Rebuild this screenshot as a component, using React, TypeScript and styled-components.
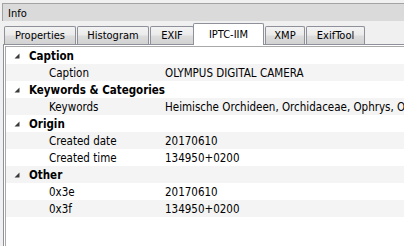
import React from 'react';
import styled, { createGlobalStyle } from 'styled-components';

const Global = createGlobalStyle`
  html, body { margin: 0; padding: 0; background: #f0f0f0; }
  body {
    font-family: "DejaVu Sans Condensed", "DejaVu Sans", sans-serif;
    font-size: 11px;
    color: #000;
  }
`;

const Frame = styled.div`
  width: 404px;
  height: 246px;
  overflow: hidden;
  background: #f0f0f0;
  box-sizing: border-box;
  padding-top: 3px;
  display: flex;
  flex-direction: column;
`;

const TitleBar = styled.div`
  margin-left: 2px;
  height: 18px;
  box-sizing: border-box;
  background: #dadada;
  border-top: 1px solid #a3a3a3;
  border-left: 1px solid #a3a3a3;
  padding-left: 5px;
  line-height: 19px;
`;

const TabBar = styled.div`
  position: relative;
  z-index: 1;
  height: 23px;
  display: flex;
  align-items: flex-end;
  gap: 1px;
  padding-left: 4px;
`;

const Tab = styled.div<{ $w: number; $active?: boolean }>`
  width: ${(p) => p.$w}px;
  box-sizing: border-box;
  flex: none;
  text-align: center;
  border: 1px solid #8e9199;
  border-bottom: none;
  border-radius: 2px 2px 0 0;
  ${(p) =>
    p.$active
      ? `
    height: 22px;
    margin: 0 0 -1px -2px;
    background: #ffffff;
    line-height: 21px;
  `
      : `
    height: 18px;
    background: linear-gradient(#f3f3f3, #ebebeb 45%, #dcdcdc 55%, #d2d2d2);
    line-height: 18px;
  `}
`;

const Pane = styled.div`
  flex: 1;
  margin-left: 3px;
  border-top: 1px solid #8e9199;
  border-left: 1px solid #8e9199;
  background: #ffffff;
  padding: 1px 0 0 1px;
  display: flex;
  flex-direction: column;
`;

const Tree = styled.div`
  flex: 1;
  border-top: 1px solid #a9a9a9;
  border-left: 1px solid #a9a9a9;
  background: #ffffff;
  font-size: 11.5px;
`;

const Row = styled.div<{ $alt: boolean }>`
  height: 17px;
  display: grid;
  grid-template-columns: 159px 1fr;
  align-items: center;
  background: ${(p) => (p.$alt ? '#f4f4f4' : '#ffffff')};
  white-space: nowrap;
  overflow: hidden;
`;

const GroupLabel = styled.div`
  grid-column: 1 / span 2;
  display: flex;
  align-items: center;
  gap: 9px;
  padding-left: 8px;
  font-weight: bold;
`;

const Key = styled.div`
  padding-left: 43px;
`;

const Value = styled.div`
  overflow: hidden;
`;

const Arrow = () => (
  <svg width="6" height="6" viewBox="0 0 6 6" style={{ flex: 'none' }}>
    <polygon points="5.5,0.5 5.5,5.5 0.5,5.5" fill="#3a3a3a" />
  </svg>
);

const tabs = [
  { label: 'Properties', w: 72 },
  { label: 'Histogram', w: 72 },
  { label: 'EXIF', w: 44 },
  { label: 'IPTC-IIM', w: 71, active: true },
  { label: 'XMP', w: 40 },
  { label: 'ExifTool', w: 59 },
];

type Item = { group: string } | { key: string; value: string };

const items: Item[] = [
  { group: 'Caption' },
  { key: 'Caption', value: 'OLYMPUS DIGITAL CAMERA' },
  { group: 'Keywords & Categories' },
  { key: 'Keywords', value: 'Heimische Orchideen, Orchidaceae, Ophrys, Ophrys insectifera' },
  { group: 'Origin' },
  { key: 'Created date', value: '20170610' },
  { key: 'Created time', value: '134950+0200' },
  { group: 'Other' },
  { key: '0x3e', value: '20170610' },
  { key: '0x3f', value: '134950+0200' },
];

export default function App() {
  return (
    <>
      <Global />
      <Frame>
        <TitleBar>Info</TitleBar>
        <TabBar>
          {tabs.map((t) => (
            <Tab key={t.label} $w={t.w} $active={t.active}>
              {t.label}
            </Tab>
          ))}
        </TabBar>
        <Pane>
          <Tree>
            {items.map((it, i) => (
              <Row key={i} $alt={i % 2 === 1}>
                {'group' in it ? (
                  <GroupLabel>
                    <Arrow />
                    {it.group}
                  </GroupLabel>
                ) : (
                  <>
                    <Key>{it.key}</Key>
                    <Value>{it.value}</Value>
                  </>
                )}
              </Row>
            ))}
          </Tree>
        </Pane>
      </Frame>
    </>
  );
}
